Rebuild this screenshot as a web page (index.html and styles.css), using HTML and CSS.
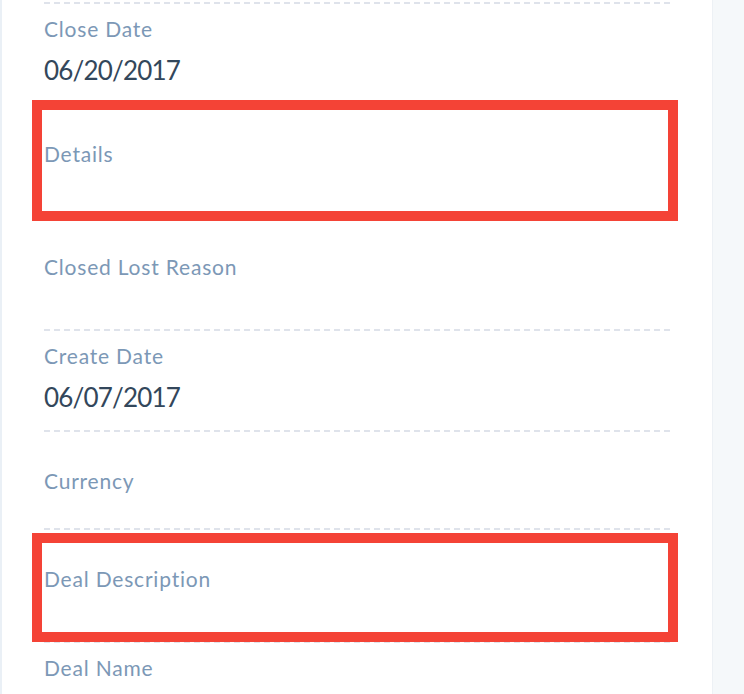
FILE: index.html
```html
<!DOCTYPE html>
<html>

<head>
    <meta charset="utf-8">
    <meta name="viewport" content="width=device-width">
    <title>Deal properties</title>
    <link rel="stylesheet" href="styles.css">
</head>

<body>
    <div class="page">
        <div class="panel">
            <div class="props">
                <div class="prop">
                    <div class="prop-label">Close Date</div>
                    <div class="prop-value">06/20/2017</div>
                </div>
                <div class="prop empty marked">
                    <div class="prop-label">Details</div>
                </div>
                <div class="prop empty">
                    <div class="prop-label">Closed Lost Reason</div>
                </div>
                <div class="prop">
                    <div class="prop-label">Create Date</div>
                    <div class="prop-value">06/07/2017</div>
                </div>
                <div class="prop empty short">
                    <div class="prop-label">Currency</div>
                </div>
                <div class="prop empty marked inner">
                    <div class="prop-label">Deal Description</div>
                </div>
                <div class="prop">
                    <div class="prop-label">Deal Name</div>
                    <div class="prop-value"></div>
                </div>
            </div>
        </div>
        <div class="aside"></div>
    </div>
</body>

</html>
```

FILE: styles.css
```css
html,
body {
    margin: 0;
    height: 100%;
    overflow: hidden;
}

body {
    font-family: Lato, "Open Sans", sans-serif;
    background: #fff;
}

.page {
    display: flex;
    height: 694px;
    overflow: hidden;
}

.panel {
    width: 668px;
    padding: 2px 0 0 42px;
    border-left: 2px solid #eaf0f6;
    background: #fff;
}

.aside {
    flex: 1;
    background: #f5f8fa;
    border-left: 1px solid #edf1f5;
}

.props {
    width: 626px;
    padding-top: 2px;
    background: repeating-linear-gradient(to right, #dfe3eb 0, #dfe3eb 6px, transparent 6px, transparent 10px) top left / 100% 2px no-repeat;
}

.prop {
    position: relative;
    box-sizing: border-box;
    height: 101px;
    padding-top: 13px;
    background: repeating-linear-gradient(to right, #dfe3eb 0, #dfe3eb 6px, transparent 6px, transparent 10px) bottom left / 100% 2px no-repeat;
}

.prop.empty {
    height: 113px;
    padding-top: 37px;
}

.prop.short {
    height: 98px;
}

.prop-label {
    font-size: 21px;
    line-height: 24px;
    letter-spacing: 0.8px;
    color: #7c98b6;
}

.prop-value {
    margin-top: 13px;
    font-size: 26px;
    line-height: 32px;
    letter-spacing: -0.8px;
    color: #33475b;
}

.marked::after {
    content: "";
    position: absolute;
    left: -12px;
    right: -8px;
    top: -5px;
    bottom: -3px;
    border: 10px solid #f44336;
}

.marked.inner::after {
    top: 3px;
    bottom: 1px;
}
```
